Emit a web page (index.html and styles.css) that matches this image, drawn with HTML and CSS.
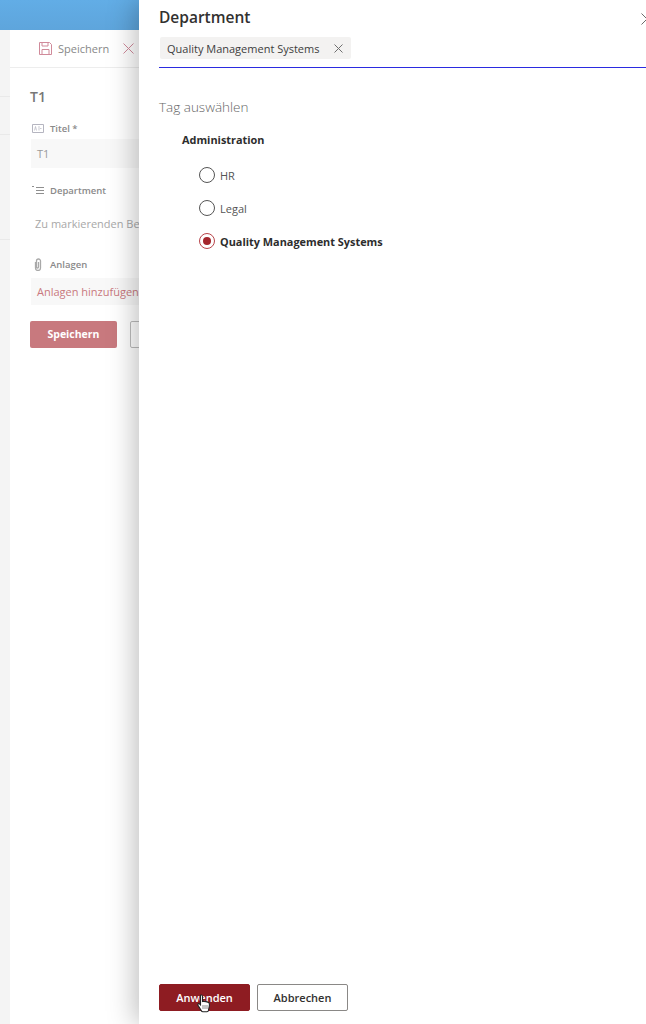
FILE: index.html
```html
<!DOCTYPE html>
<html lang="de">
<head>
    <meta charset="UTF-8">
    <meta name="viewport" content="width=device-width, initial-scale=1.0">
    <title>Department</title>
    <link rel="stylesheet" href="styles.css">
</head>
<body>
    <div class="page">

        <div class="behind">
            <div class="suite-bar"></div>
            <div class="behind-body">
                <div class="rail">
                    <div class="rail-row rail-row-first"></div>
                    <div class="rail-row"></div>
                    <div class="rail-row rail-row-last"></div>
                </div>
                <div class="form">
                    <div class="command-bar">
                        <svg class="cmd-icon" width="13" height="13" viewBox="0 0 13 13" fill="none" stroke="#d08a9a" stroke-width="1">
                            <path d="M.5.5h10l2 2v10H.5z"/>
                            <path d="M3 .5V4h6V.5M3 12.5v-5h7v5"/>
                        </svg>
                        <span class="cmd-label">Speichern</span>
                        <svg class="cmd-close" width="11" height="11" viewBox="0 0 11 11" stroke="#d08a9a" stroke-width="1">
                            <path d="M.5.5l10 10M10.5.5l-10 10"/>
                        </svg>
                    </div>
                    <div class="form-title">T1</div>

                    <div class="field-label field-label-first">
                        <svg width="12" height="9" viewBox="0 0 12 9" fill="none" stroke="#b5b5c0" stroke-width="1"><path d="M.5.5h11v8H.5z"/><path d="M2.5 6.5l1-4 1 4M7 2v4.5M9.5 4.5H8" stroke-width=".7"/></svg>
                        <span>Titel *</span>
                    </div>
                    <div class="field-input">T1</div>

                    <div class="field-label field-label-dept">
                        <svg width="12" height="9" viewBox="0 0 12 9" fill="none" stroke="#8f8f8f" stroke-width="1"><path d="M0 .5h2M4 1.5h8M4 4.5h8M4 7.5h8"/></svg>
                        <span>Department</span>
                    </div>
                    <div class="field-placeholder">Zu markierenden Be</div>

                    <div class="field-label field-label-files">
                        <svg width="12" height="13" viewBox="0 0 12 13" fill="none" stroke="#a9a9a9" stroke-width="1.3"><path d="M3.5 4v6a2.5 2.5 0 0 0 5 0V3a2 2 0 0 0-4 0v6a1 1 0 0 0 2 0V4"/></svg>
                        <span>Anlagen</span>
                    </div>
                    <div class="field-attach">Anlagen hinzufügen</div>

                    <div class="form-actions">
                        <div class="btn-save">Speichern</div>
                        <div class="btn-cancel-behind"></div>
                    </div>
                </div>
            </div>
        </div>

        <div class="panel">
            <div class="panel-head">
                <h1 class="panel-title">Department</h1>
                <svg class="panel-close" width="12" height="12" viewBox="0 0 12 12" stroke="#6b6b6b" stroke-width="1"><path d="M.5.5l11 11M11.5.5l-11 11"/></svg>
            </div>
            <div class="tag-box">
                <div class="chip">
                    <span>Quality Management Systems</span>
                    <svg width="9" height="9" viewBox="0 0 9 9" stroke="#6f6f6f" stroke-width="1"><path d="M.5.5l8 8M8.5.5l-8 8"/></svg>
                </div>
            </div>

            <div class="section-title">Tag auswählen</div>
            <div class="group-name">Administration</div>

            <div class="radio-row"><span class="radio"></span><span class="radio-label">HR</span></div>
            <div class="radio-row"><span class="radio"></span><span class="radio-label">Legal</span></div>
            <div class="radio-row radio-row-selected"><span class="radio"></span><span class="radio-label">Quality Management Systems</span></div>

            <div class="panel-foot">
                <div class="btn btn-primary">Anwenden</div>
                <div class="btn btn-default">Abbrechen</div>
            </div>
        </div>

        <svg class="cursor" width="14" height="20" viewBox="0 0 14 20">
            <path d="M3.5 1.2c.9-.6 2 0 2 1.1v5.300c1.500-.5 5.500.2 6.300 1 .7.700.7 2 .5 3.400l-.8 4.300c-.1.800-.7 1.400-1.500 1.400H5.800c-.6 0-1.100-.3-1.400-.8L1 11.200c-.5-.9.500-2 1.500-1.300l1 1z" fill="#fff" stroke="#222" stroke-width="1.1"/>
            <path d="M6 11v4M8 11v4M10 11v4" stroke="#555" stroke-width=".7"/>
        </svg>

    </div>
</body>
</html>
```

FILE: styles.css
```css
html, body {
    margin: 0;
    padding: 0;
}

body {
    font-family: 'Open Sans', 'Noto Sans', sans-serif;
    background-color: white;
    color: #333;
}

.page {
    position: relative;
    display: flex;
    width: 646px;
    height: 1024px;
    overflow: hidden;
}

/* page behind the panel, faded out */
.behind {
    flex: none;
    width: 139px;
    overflow: hidden;
}

.suite-bar {
    height: 30px;
    background: linear-gradient(#62ade6, #5ea5dc);
}

.behind-body {
    display: flex;
    height: 994px;
}

.rail {
    flex: none;
    width: 10px;
    background-color: #f4f4f4;
}

.rail-row {
    height: 37px;
    border-bottom: 1px solid #e9e9e9;
}

.rail-row-first {
    height: 66px;
}

.rail-row-last {
    height: 104px;
}

.form {
    flex: none;
    width: 400px;
    background-color: white;
}

.command-bar {
    display: flex;
    align-items: center;
    height: 37px;
    padding-left: 29px;
    border-bottom: 1px solid #ededed;
    font-size: 11px;
    color: #888;
}

.cmd-label {
    margin-left: 6px;
}

.cmd-close {
    margin-left: 14px;
}

.form-title {
    margin: 19px 0 0 20px;
    font-size: 14px;
    font-weight: 600;
    line-height: 19px;
    color: #777;
}

.field-label {
    display: flex;
    align-items: center;
    gap: 6px;
    margin-left: 22px;
    font-size: 9.5px;
    font-weight: 600;
    line-height: 13px;
    color: #8a8a8a;
}

.field-label-first {
    margin-top: 16px;
}

.field-label-dept {
    margin-top: 16px;
}

.field-label-files {
    margin-top: 27px;
}

.field-input,
.field-attach {
    margin: 4px 0 0 21px;
    padding-left: 6px;
    background-color: #f8f8f8;
    font-size: 11px;
}

.field-input {
    height: 29px;
    line-height: 29px;
    color: #9a9a9a;
}

.field-placeholder {
    margin: 19px 0 0 25px;
    font-size: 11px;
    line-height: 15px;
    color: #a8a8a8;
    white-space: nowrap;
}

.field-attach {
    margin-top: 7px;
    height: 27px;
    line-height: 27px;
    color: #c9797e;
    white-space: nowrap;
}

.form-actions {
    display: flex;
    gap: 13px;
    margin: 16px 0 0 20px;
}

.btn-save {
    width: 87px;
    height: 27px;
    line-height: 27px;
    border-radius: 2px;
    background-color: #c8797e;
    color: white;
    font-size: 10.5px;
    font-weight: 700;
    text-align: center;
}

.btn-cancel-behind {
    width: 87px;
    height: 25px;
    border: 1px solid #bdbdbd;
    border-radius: 2px;
}

/* the tag picker panel */
.panel {
    position: relative;
    flex: none;
    display: flex;
    flex-direction: column;
    box-sizing: border-box;
    width: 520px;
    height: 1024px;
    padding: 0 0 13px 20px;
    background-color: white;
    box-shadow: -4px 0 26px rgba(0, 0, 0, 0.26);
}

.panel-head {
    display: flex;
    align-items: center;
    justify-content: space-between;
    height: 37px;
    padding-right: 6px;
}

.panel-title {
    margin: 0 0 4px;
    font-size: 15.5px;
    font-weight: 600;
    color: #323130;
}

.tag-box {
    display: flex;
    align-items: flex-start;
    height: 30px;
    padding-left: 1px;
    border-bottom: 1px solid #2b2be0;
}

.chip {
    display: flex;
    align-items: center;
    gap: 15px;
    height: 22px;
    padding: 0 8px 0 7px;
    border-radius: 2px;
    background-color: #f3f2f1;
    font-size: 11px;
    color: #3d3d3d;
}

.section-title {
    margin-top: 30px;
    font-size: 13.5px;
    font-weight: 300;
    line-height: 19px;
    color: #666;
}

.group-name {
    margin: 15px 0 0 23px;
    font-size: 10.9px;
    font-weight: 700;
    line-height: 15px;
    color: #2d2d2d;
}

.radio-row {
    display: flex;
    align-items: center;
    gap: 5px;
    height: 33px;
    margin-left: 40px;
    font-size: 11px;
    color: #555;
}

.group-name + .radio-row {
    margin-top: 11px;
}

.radio {
    box-sizing: border-box;
    position: relative;
    width: 16px;
    height: 16px;
    border: 1px solid #555;
    border-radius: 50%;
}

.radio-label {
    padding-top: 2px;
}

.radio-row-selected .radio {
    border-color: #b8444a;
}

.radio-row-selected .radio::after {
    content: "";
    position: absolute;
    top: 3px;
    left: 3px;
    width: 8px;
    height: 8px;
    border-radius: 50%;
    background-color: #a4262c;
}

.radio-row-selected .radio-label {
    font-size: 10.9px;
    font-weight: 700;
    color: #2d2d2d;
}

.panel-foot {
    display: flex;
    gap: 7px;
    margin-top: auto;
}

.btn {
    box-sizing: border-box;
    width: 91px;
    height: 27px;
    border-radius: 2px;
    font-size: 11px;
    font-weight: 600;
    line-height: 25px;
    text-align: center;
}

.btn-primary {
    border: 1px solid #8e1c22;
    background-color: #8e1c22;
    color: white;
}

.btn-default {
    border: 1px solid #8a8886;
    background-color: white;
    color: #323130;
}

/* mouse pointer caught in the screenshot */
.cursor {
    position: absolute;
    left: 197px;
    top: 994px;
}
```
